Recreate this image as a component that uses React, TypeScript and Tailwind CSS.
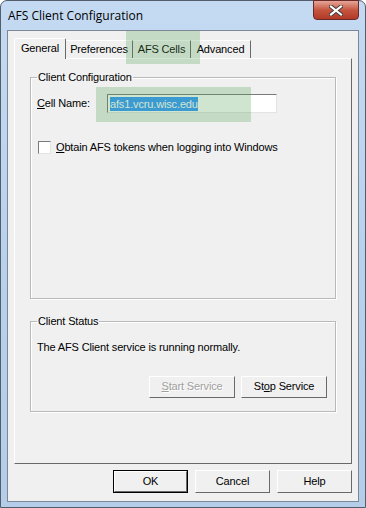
import React from "react";

const ui = { fontFamily: '"Liberation Sans", Arial, sans-serif' };

function Btn({ children, disabled, def, className }: { children: React.ReactNode; disabled?: boolean; def?: boolean; className?: string }) {
  return (
    <div
      className={
        "flex items-center justify-center text-[11px] bg-[#f0f0f0] " +
        (def ? "border border-[#000000] " : "") +
        (className || "")
      }
    >
      <div className="w-full h-full flex items-center justify-center border border-t-white border-l-white border-r-[#696969] border-b-[#696969]">
        <span className={disabled ? "text-[#a0a0a0] [text-shadow:1px_1px_0_#ffffff]" : "text-black"}>{children}</span>
      </div>
    </div>
  );
}

export default function App() {
  return (
    <div className="w-[366px] h-[508px] relative overflow-hidden tracking-[-0.15px]" style={ui}>
      <div className="absolute inset-0 rounded-t-[7px] border border-[#545d6b] bg-gradient-to-b from-[#c4daf2] via-[#b9d2ec] to-[#b4cde8] flex flex-col">
        {/* title bar */}
        <div className="h-[29px] flex items-center pl-[7px] shrink-0">
          <span className="text-[12px] text-black tracking-normal" style={{ fontFamily: '"Open Sans", "Noto Sans", sans-serif' }}>
            AFS Client Configuration
          </span>
        </div>
        {/* close button */}
        <div className="absolute top-[-1px] right-[6px] w-[46px] h-[20px] rounded-b-[4px] border border-[#6b2a2a] bg-gradient-to-b from-[#e4a598] via-[#c6553f] to-[#b13a27] flex items-center justify-center">
          <svg width="14" height="11" viewBox="0 0 14 11">
            <path d="M2 1.5 L12 9.5 M12 1.5 L2 9.5" stroke="#3b3b3b" strokeWidth="4" strokeLinecap="square" />
            <path d="M2 1.5 L12 9.5 M12 1.5 L2 9.5" stroke="#ffffff" strokeWidth="2.2" strokeLinecap="square" />
          </svg>
        </div>
        {/* client area */}
        <div className="mx-[6px] h-[472px] border border-[#7b8797] bg-[#f0f0f0] flex flex-col relative">
          {/* tabs */}
          <div className="flex items-end h-[21px] mt-[6px] pl-[6px]">
            <div className="w-[52px] h-[21px] bg-[#f0f0f0] border-t border-l border-white border-r border-r-[#696969] rounded-t-[2px] flex items-center justify-center text-[11px] relative z-10 -mb-px pb-[1px]">
              General
            </div>
            <div className="w-[67px] h-[18px] border-t border-white border-r border-r-[#696969] flex items-center justify-center text-[11px]">
              Preferences
            </div>
            <div className="w-[58px] h-[18px] border-t border-white border-r border-r-[#696969] flex items-center justify-center text-[11px]">
              AFS Cells
            </div>
            <div className="w-[60px] h-[18px] border-t border-white border-r border-r-[#696969] flex items-center justify-center text-[11px]">
              Advanced
            </div>
          </div>
          {/* panel */}
          <div className="mx-[6px] h-[406px] border-t border-l border-white border-r border-b border-r-[#696969] border-b-[#696969] flex flex-col px-[15px] pt-[12px]">
            {/* Client Configuration group */}
            <fieldset className="h-[228px] border border-[#b9b9b9] shadow-[inset_1px_1px_0_#ffffff,1px_1px_0_#ffffff] px-[6px] m-0 min-w-0">
              <legend className="text-[11px] px-[1px] ml-[0px] leading-[13px]">Client Configuration</legend>
              <div className="flex items-center mt-[10px]">
                <span className="text-[11px] w-[70px]"><span className="underline">C</span>ell Name:</span>
                <div className="w-[170px] h-[19px] bg-white border border-t-[#7a7a7a] border-l-[#7a7a7a] border-r-[#e3e3e3] border-b-[#e3e3e3] flex items-center pl-[2px]">
                  <span className="bg-[#3399ff] text-white text-[11px] leading-[14px] px-0">afs1.vcru.wisc.edu</span>
                </div>
              </div>
              <div className="flex items-center mt-[26px]">
                <div className="w-[13px] h-[13px] bg-white border border-t-[#7a7a7a] border-l-[#7a7a7a] border-r-[#e3e3e3] border-b-[#e3e3e3] ml-[1px]" />
                <span className="text-[11px] ml-[5px]"><span className="underline">O</span>btain AFS tokens when logging into Windows</span>
              </div>
            </fieldset>
            {/* Client Status group */}
            <fieldset className="h-[97px] mt-[16px] border border-[#b9b9b9] shadow-[inset_1px_1px_0_#ffffff,1px_1px_0_#ffffff] px-[6px] m-0 min-w-0">
              <legend className="text-[11px] px-[1px] leading-[13px]">Client Status</legend>
              <div className="text-[11px] mt-[11px]">The AFS Client service is running normally.</div>
              <div className="flex justify-end gap-[6px] mt-[20px] pr-[2px]">
                <Btn disabled className="w-[86px] h-[22px]"><span className="underline">S</span>tart Service</Btn>
                <Btn className="w-[86px] h-[22px]">St<span className="underline">o</span>p Service</Btn>
              </div>
            </fieldset>
          </div>
          {/* bottom buttons */}
          <div className="flex justify-end gap-[7px] mt-[6px] pr-[6px]">
            <Btn def className="w-[75px] h-[23px]">OK</Btn>
            <Btn className="w-[75px] h-[23px]">Cancel</Btn>
            <Btn className="w-[75px] h-[23px]">Help</Btn>
          </div>
        </div>
      </div>
      {/* green highlight overlays */}
      <div className="absolute left-[126px] top-[31px] w-[74px] h-[33px] bg-[rgba(80,160,80,0.27)]" />
      <div className="absolute left-[96px] top-[87px] w-[155px] h-[35px] bg-[rgba(80,160,80,0.27)]" />
    </div>
  );
}
